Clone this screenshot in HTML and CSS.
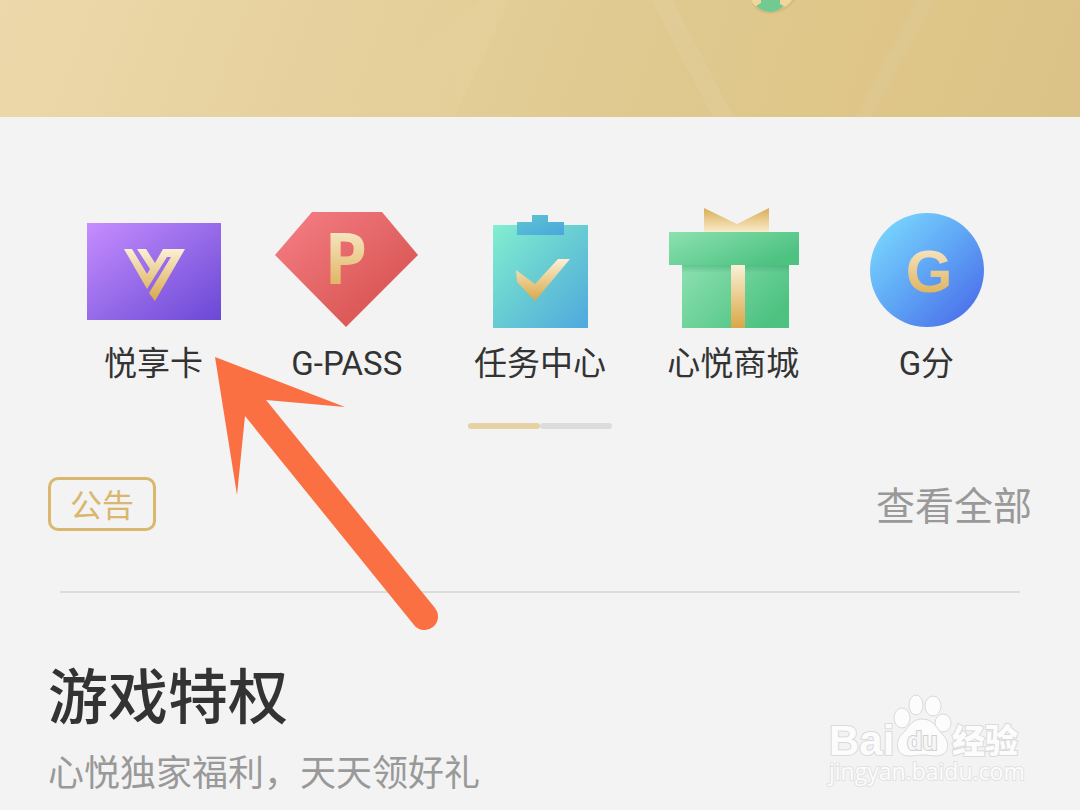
FILE: index.html
```
<!DOCTYPE html>
<html lang="zh-CN">
    <head>
        <meta charset="utf-8">
        <meta name="viewport" content="width=device-width, initial-scale=1">
        <title>心悦</title>
        <link rel="stylesheet" href="styles.css">
    </head>
    <body>
        <div class="banner">
            <svg class="banner_art" viewBox="0 0 1080 117" preserveAspectRatio="none">
                <defs>
                    <linearGradient id="ray" x1="0" y1="0" x2="1" y2="0">
                        <stop offset="0" stop-color="#e8d0a0" stop-opacity="0"/>
                        <stop offset="1" stop-color="#e8d0a0" stop-opacity=".4"/>
                    </linearGradient>
                </defs>
                <path d="M480 0H510L454 117H335Z" fill="url(#ray)"/>
                <path d="M651 0H673L733 117H713Z" fill="#e4d0a0" opacity=".4"/>
                <path d="M917 0H935L872 117H856Z" fill="#dccb9a" opacity=".4"/>
                <path d="M750 0H796Q784 14 770 14Q756 14 750 0Z" fill="#d2b878" opacity=".7"/>
                <path d="M751 0H761L762 8Q753 7 751 0ZM779 0H792Q788 7 779 8Z" fill="#efd79c"/>
                <path d="M761 0H780V4L784 6Q777 12 770 12Q763 12 756 6L761 3Z" fill="#72ca92"/>
            </svg>
        </div>

        <div class="menu">
            <a class="item" href="#">
                <svg viewBox="0 0 144 120">
                    <defs>
                        <linearGradient id="purple" x1="0" y1="0" x2="1" y2="1">
                            <stop offset="0" stop-color="#c68dff"/>
                            <stop offset=".5" stop-color="#976be9"/>
                            <stop offset="1" stop-color="#6a48d6"/>
                        </linearGradient>
                        <linearGradient id="gold" x1="0" y1="0" x2="0" y2="1">
                            <stop offset="0" stop-color="#fbf0d6"/>
                            <stop offset="1" stop-color="#d9a747"/>
                        </linearGradient>
                    </defs>
                    <rect x="5" y="15" width="134" height="97" fill="url(#purple)"/>
                    <path d="M42 41H50L65 66L68 61L55 41H64L73 55L81 41H103L73 93L67 85L89 49H85L65 81Z" fill="url(#gold)"/>
                </svg>
                <span>悦享卡</span>
            </a>
            <a class="item" href="#">
                <svg viewBox="0 0 144 120">
                    <defs>
                        <linearGradient id="red" x1="0" y1="0" x2="1" y2="1">
                            <stop offset=".1" stop-color="#f27a80"/>
                            <stop offset=".8" stop-color="#d95653"/>
                        </linearGradient>
                    </defs>
                    <path d="M37 4H107L143 47L71 119L0 47Z" fill="url(#red)"/>
                    <text class="mark" x="71" y="76" font-size="70" fill="url(#gold)">P</text>
                </svg>
                <span>G-PASS</span>
            </a>
            <a class="item" href="#">
                <svg viewBox="0 0 144 120">
                    <defs>
                        <linearGradient id="teal" x1="0" y1="0" x2="1" y2="1">
                            <stop offset="0" stop-color="#83eed0"/>
                            <stop offset=".5" stop-color="#67cbd3"/>
                            <stop offset="1" stop-color="#50a8de"/>
                        </linearGradient>
                        <linearGradient id="clip" x1="0" y1="0" x2="1" y2="1">
                            <stop offset="0" stop-color="#5cc6d2"/>
                            <stop offset="1" stop-color="#4ba6dc"/>
                        </linearGradient>
                    </defs>
                    <rect x="25" y="17" width="95" height="103" fill="url(#teal)"/>
                    <path d="M49 14H64V7H80V14H96V27H49Z" fill="url(#clip)"/>
                    <path d="M48 62L67 76L90 51H102L67 93L49 74Z" fill="url(#gold)"/>
                </svg>
                <span>任务中心</span>
            </a>
            <a class="item" href="#">
                <svg viewBox="0 0 144 120">
                    <defs>
                        <linearGradient id="green" x1="0" y1="0" x2="1" y2=".6">
                            <stop offset="0" stop-color="#8ce1b0"/>
                            <stop offset="1" stop-color="#4dc281"/>
                        </linearGradient>
                        <linearGradient id="shade" x1="0" y1="0" x2="0" y2="1">
                            <stop offset="0" stop-color="#2f9a64" stop-opacity=".4"/>
                            <stop offset="1" stop-color="#2f9a64" stop-opacity="0"/>
                        </linearGradient>
                        <linearGradient id="bow" x1="0" y1="0" x2="0" y2="1">
                            <stop offset="0" stop-color="#d9ad55"/>
                            <stop offset="1" stop-color="#faeccb"/>
                        </linearGradient>
                    </defs>
                    <path d="M43 0L76 16L108 0V24H43Z" fill="url(#bow)"/>
                    <rect x="21" y="57" width="107" height="63" fill="url(#green)"/>
                    <rect x="21" y="57" width="107" height="8" fill="url(#shade)"/>
                    <rect x="8" y="24" width="130" height="33" fill="url(#green)"/>
                    <rect x="70" y="57" width="14" height="63" fill="url(#gold)"/>
                </svg>
                <span>心悦商城</span>
            </a>
            <a class="item" href="#">
                <svg viewBox="0 0 144 120">
                    <defs>
                        <linearGradient id="blue" x1="0" y1="0" x2="1" y2="1">
                            <stop offset=".1" stop-color="#78d5fe"/>
                            <stop offset=".5" stop-color="#5fa5f5"/>
                            <stop offset=".9" stop-color="#4b70ea"/>
                        </linearGradient>
                    </defs>
                    <circle cx="73" cy="62" r="57" fill="url(#blue)"/>
                    <text class="mark wide" x="75" y="84" font-size="60" fill="url(#gold)">G</text>
                </svg>
                <span>G分</span>
            </a>
        </div>

        <div class="pager"><i class="on"></i><i></i></div>

        <div class="notice">
            <span class="tag">公告</span>
            <a class="more" href="#">查看全部</a>
        </div>

        <div class="privilege">
            <h2>游戏特权</h2>
            <p>心悦独家福利，天天领好礼</p>
        </div>

        <svg class="arrow" viewBox="0 0 224 274">
            <path d="M1 1L131 51L52 44L221 252A13 13 0 0 1 200 269L31 60L23 139Z" fill="#fb7042"/>
        </svg>

        <svg class="watermark" viewBox="0 0 200 100">
            <text class="wm_bold" x="4" y="65" font-size="42">Bai</text>
            <ellipse cx="77" cy="28" rx="8" ry="10"/>
            <ellipse cx="91" cy="15" rx="7" ry="10"/>
            <ellipse cx="108" cy="16" rx="8" ry="10"/>
            <ellipse cx="118" cy="33" rx="8" ry="9"/>
            <path d="M97 29C86 29 84 38 77 44C70 50 70 66 84 66C90 66 92 65 98 65C104 65 106 66 112 66C125 65 125 52 118 45C111 38 109 29 97 29Z"/>
            <text class="wm_bold wm_du" x="82" y="60" font-size="25">du</text>
            <text class="wm_cn" x="127" y="63" font-size="33">经验</text>
            <text class="wm_url" x="4" y="90" font-size="23">jingyan.baidu.com</text>
        </svg>
    </body>
</html>
```
FILE: styles.css
```
* {
    box-sizing: border-box;
}
body {
    margin: 0;
    background: #f3f3f3;
    color: #333;
    font-family: Roboto, "Noto Sans CJK SC", sans-serif;
    position: relative;
}
a {
    color: inherit;
    text-decoration: none;
}

.banner {
    height: 117px;
    background: linear-gradient(110deg, #ecd8aa 0%, #e5d09c 35%, #dfc98f 60%, #dfc688 80%, #dbc388 100%);
}
.banner_art {
    display: block;
    width: 100%;
    height: 100%;
}

.menu {
    display: grid;
    grid-template-columns: repeat(5, 1fr);
    padding: 91px 57px 0;
}
.item {
    display: flex;
    flex-direction: column;
    align-items: center;
    gap: 14px;
    font-size: 33px;
    line-height: 44px;
    white-space: nowrap;
}
.item svg {
    width: 144px;
    height: 120px;
}
.mark {
    font-family: "DejaVu Sans Mono", monospace;
    font-weight: bold;
    text-anchor: middle;
}
.wide {
    font-family: "Liberation Sans", sans-serif;
}

.pager {
    display: flex;
    justify-content: center;
    margin-top: 37px;
}
.pager i {
    width: 72px;
    height: 6px;
    border-radius: 3px;
    background: #dcdcdc;
}
.pager .on {
    background: #e4d2a4;
}

.notice {
    display: flex;
    justify-content: space-between;
    align-items: center;
    margin-top: 48px;
    padding: 0 48px;
}
.tag {
    padding: 4px 19px 0;
    border: 3px solid #d9b76f;
    border-radius: 10px;
    color: #d9b76f;
    font-size: 32px;
    line-height: 44px;
}
.more {
    padding-top: 6px;
    color: #999;
    font-size: 39px;
    line-height: 48px;
}

.privilege {
    margin: 60px 60px 0;
    border-top: 2px solid #dcdcdc;
    padding-top: 70px;
}
.privilege h2,
.privilege p {
    margin: 0 -12px;
}
.privilege h2 {
    font-size: 60px;
    font-weight: 500;
    line-height: 72px;
}
.privilege p {
    margin-top: 15px;
    color: #999;
    font-size: 36px;
    line-height: 48px;
}

.arrow {
    position: absolute;
    left: 214px;
    top: 356px;
    width: 224px;
    height: 274px;
}

.watermark {
    position: absolute;
    right: 55px;
    top: 690px;
    width: 200px;
    height: 100px;
    fill: #fcfcfc;
    stroke: #dadada;
    stroke-width: 1px;
}
.watermark text {
    paint-order: stroke;
    stroke-width: 2px;
}
.wm_bold {
    font-family: "Liberation Sans", sans-serif;
    font-weight: bold;
}
.watermark .wm_du {
    fill: #f6f6f6;
    stroke: #d0d0d0;
}
.wm_cn {
    font-family: "Noto Sans CJK SC", sans-serif;
    font-weight: 900;
}
.watermark .wm_url {
    font-family: "Open Sans", sans-serif;
    stroke: #e2e2e2;
}
```
